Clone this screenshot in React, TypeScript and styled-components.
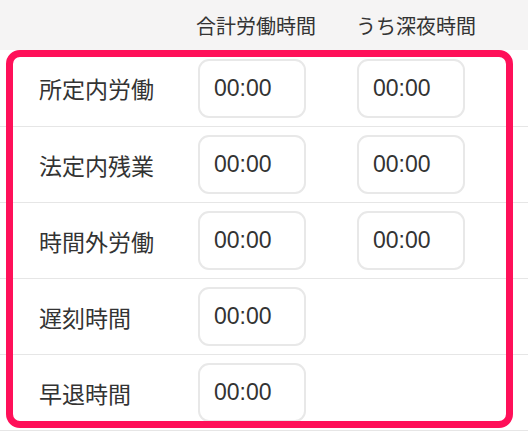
import React from "react";
import styled, { createGlobalStyle } from "styled-components";

const GlobalStyle = createGlobalStyle`
  body {
    margin: 0;
    background: #ffffff;
    font-family: "Liberation Sans", "Noto Sans CJK JP", sans-serif;
    color: #333333;
  }
`;

const Wrapper = styled.div`
  position: relative;
  width: 528px;
  height: 432px;
  overflow: hidden;
`;

const HeaderRow = styled.div`
  display: grid;
  grid-template-columns: 157px 160px 1fr;
  align-items: center;
  height: 50px;
  padding-left: 39px;
  background: #f5f4f4;
  font-size: 20px;
  color: #333333;

  span {
    white-space: nowrap;
  }
`;

const Row = styled.div`
  display: grid;
  grid-template-columns: 159px 159px 1fr;
  align-items: center;
  height: 75px;
  padding-left: 39px;
  border-top: 1px solid #e6e6e6;

  &:first-of-type {
    border-top: 0;
    height: 76px;
  }
`;

const Label = styled.span`
  font-size: 23px;
  color: #333333;
  white-space: nowrap;
`;

const TimeBox = styled.div`
  box-sizing: border-box;
  width: 108px;
  height: 59px;
  display: flex;
  align-items: center;
  padding-left: 14px;
  border: 2px solid #e8e8e8;
  border-radius: 11px;
  font-size: 23px;
  color: #333333;
`;

const Body = styled.div`
  display: flex;
  flex-direction: column;
  border-bottom: 1px solid #e6e6e6;
`;

const Highlight = styled.div`
  position: absolute;
  left: 6px;
  top: 50px;
  width: 507px;
  height: 378px;
  box-sizing: border-box;
  border: 7px solid #ff1059;
  border-radius: 14px;
  pointer-events: none;
`;

const ROWS: { label: string; night: boolean }[] = [
  { label: "所定内労働", night: true },
  { label: "法定内残業", night: true },
  { label: "時間外労働", night: true },
  { label: "遅刻時間", night: false },
  { label: "早退時間", night: false },
];

const App = () => {
  return (
    <Wrapper>
      <GlobalStyle />
      <HeaderRow>
        <span />
        <span>合計労働時間</span>
        <span>うち深夜時間</span>
      </HeaderRow>
      <Body>
        {ROWS.map(row => (
          <Row key={row.label}>
            <Label>{row.label}</Label>
            <TimeBox>00:00</TimeBox>
            {row.night ? <TimeBox>00:00</TimeBox> : <span />}
          </Row>
        ))}
      </Body>
      <Highlight />
    </Wrapper>
  );
};

export default App;
